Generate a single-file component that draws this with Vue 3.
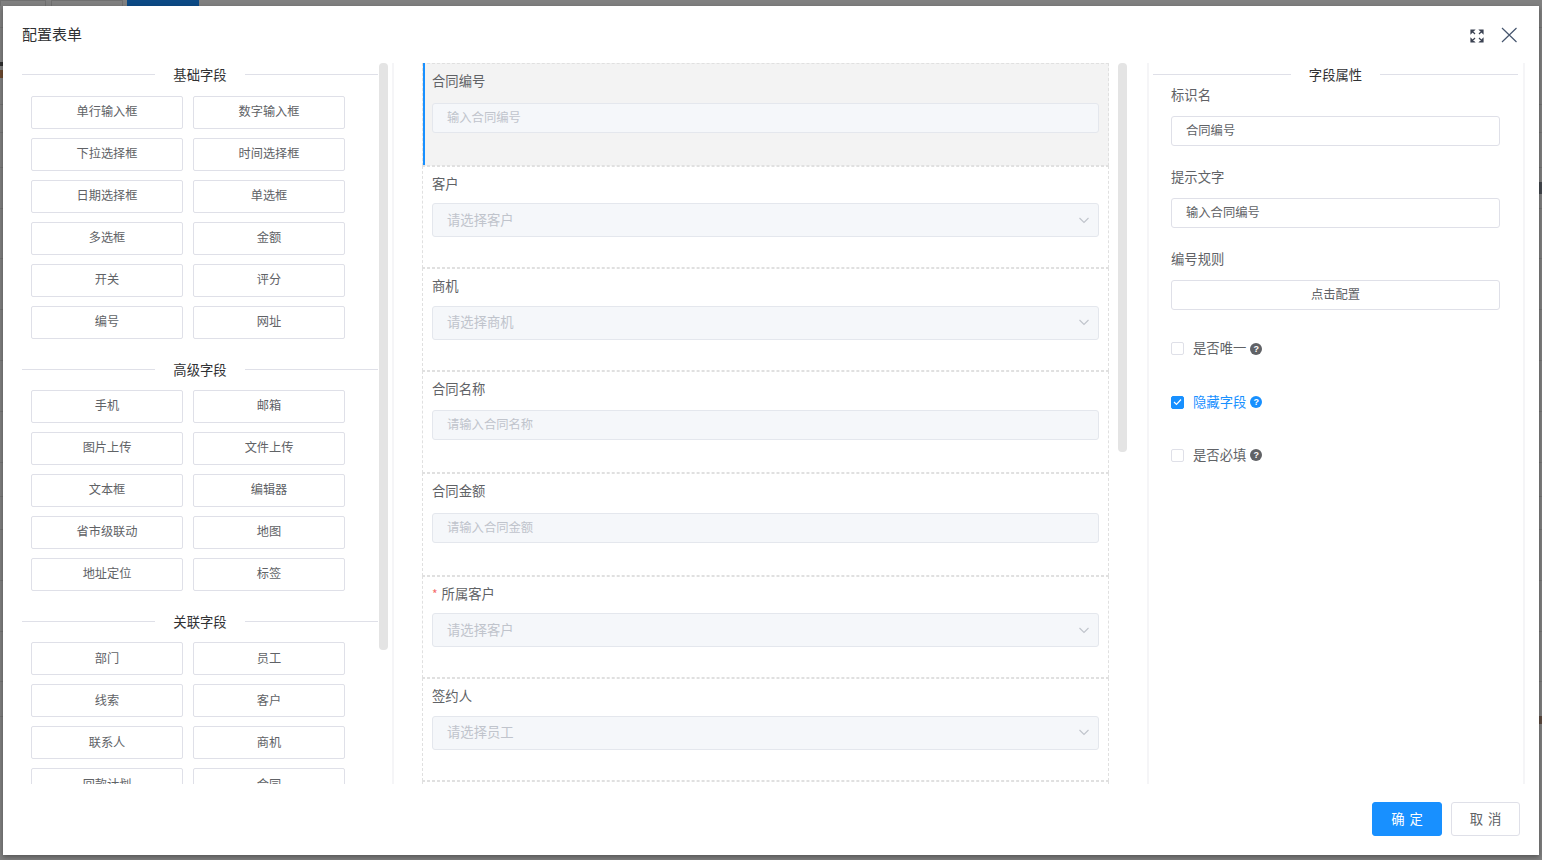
<script setup>
const groups = [
  { title: '基础字段', items: ['单行输入框', '数字输入框', '下拉选择框', '时间选择框', '日期选择框', '单选框', '多选框', '金额', '开关', '评分', '编号', '网址'] },
  { title: '高级字段', items: ['手机', '邮箱', '图片上传', '文件上传', '文本框', '编辑器', '省市级联动', '地图', '地址定位', '标签'] },
  { title: '关联字段', items: ['部门', '员工', '线索', '客户', '联系人', '商机', '回款计划', '合同'] }
]
const fields = [
  { label: '合同编号', ph: '输入合同编号', active: true },
  { label: '客户', ph: '请选择客户', select: true },
  { label: '商机', ph: '请选择商机', select: true },
  { label: '合同名称', ph: '请输入合同名称' },
  { label: '合同金额', ph: '请输入合同金额' },
  { label: '所属客户', ph: '请选择客户', select: true, required: true },
  { label: '签约人', ph: '请选择员工', select: true },
  { label: '签约日期', ph: '请选择日期', select: true }
]
const checks = [
  { label: '是否唯一', on: false },
  { label: '隐藏字段', on: true },
  { label: '是否必填', on: false }
]
const bgLines = [27, 104, 132, 167, 208, 258, 309, 360, 411, 462, 496, 529, 580, 631, 681, 716]
</script>

<template>
  <div class="page">
    <div class="bg-layer">
      <i v-for="y in bgLines" :key="y" class="bg-line" :style="{ top: y + 'px' }"></i>
      <i class="bg-mark left-mark"></i>
      <i class="bg-mark right-mark"></i>
      <i class="bg-mark right-mark2"></i>
    </div>
    <div class="backdrop-top">
      <span class="bg-btn w46"></span>
      <span class="bg-btn w72"></span>
      <span class="bg-btn primary"></span>
    </div>
    <div class="dialog">
      <header class="head">
        <span class="title">配置表单</span>
        <div class="head-icons">
          <svg class="ic-full" width="14" height="14" viewBox="0 0 14 14" fill="#3c4353" stroke="#3c4353" stroke-width="1.2">
            <path d="M1 1h3.200L1 4.200zM1.500 1.500l3.500 3.500" />
            <path d="M13 1H9.800L13 4.200zM12.500 1.500L9 5" />
            <path d="M1 13h3.200L1 9.800zM1.500 12.500L5 9" />
            <path d="M13 13H9.800L13 9.800zM12.500 12.500L9 9" />
          </svg>
          <svg class="ic-close" width="16" height="16" viewBox="0 0 16 16" fill="none" stroke="#46566e" stroke-width="1.2">
            <path d="M1 1l14.500 14M15.500 1L1 15" />
          </svg>
        </div>
      </header>

      <div class="body">
        <aside class="col-left">
          <section v-for="g in groups" :key="g.title" class="group">
            <div class="divider"><i></i><span>{{ g.title }}</span><i></i></div>
            <div class="btn-grid">
              <div v-for="it in g.items" :key="it" class="field-btn">{{ it }}</div>
            </div>
          </section>
          <div class="thumb thumb-left"></div>
        </aside>

        <main class="col-mid">
          <div class="list">
            <div v-for="f in fields" :key="f.label" class="item" :class="{ active: f.active }">
              <div class="item-label"><em v-if="f.required">*</em>{{ f.label }}</div>
              <div class="ctrl-row">
                <div v-if="f.select" class="ctrl select">
                  <span>{{ f.ph }}</span>
                  <svg class="chev" width="12" height="7" viewBox="0 0 12 7" fill="none" stroke="#c0c4cc" stroke-width="1.1"><path d="M1.500 1l4.500 4.500L10.500 1" /></svg>
                </div>
                <div v-else class="ctrl input"><span>{{ f.ph }}</span></div>
              </div>
            </div>
          </div>
          <div class="thumb thumb-mid"></div>
        </main>

        <aside class="col-right">
          <div class="divider right"><i></i><span>字段属性</span><i></i></div>
          <div class="props">
            <div class="prop">
              <div class="prop-label">标识名</div>
              <div class="prop-input">合同编号</div>
            </div>
            <div class="prop">
              <div class="prop-label">提示文字</div>
              <div class="prop-input">输入合同编号</div>
            </div>
            <div class="prop">
              <div class="prop-label">编号规则</div>
              <div class="prop-input center">点击配置</div>
            </div>
            <div class="checks">
              <div v-for="c in checks" :key="c.label" class="check" :class="{ on: c.on }">
                <span class="box">
                  <svg v-if="c.on" width="9" height="8" viewBox="0 0 9 8" fill="none" stroke="#fff" stroke-width="1.2"><path d="M1 4l2.500 2.500L8 1.500" /></svg>
                </span>
                <span class="check-text">{{ c.label }}</span>
                <span class="help">?</span>
              </div>
            </div>
          </div>
        </aside>
      </div>

      <footer class="foot">
        <button class="btn primary-btn">确 定</button>
        <button class="btn plain-btn">取 消</button>
      </footer>
    </div>
  </div>
</template>

<style>
html, body { margin: 0; padding: 0; background: #808080; overflow: hidden; }
</style>

<style scoped>
* { box-sizing: border-box; }
.page {
  width: 1542px;
  height: 860px;
  padding: 6px 3px 5px;
  position: relative;
  overflow: hidden;
  background: #808080;
  font-family: "Noto Sans CJK SC", "Noto Sans", sans-serif;
  color: #606266;
}
.bg-layer { position: absolute; inset: 0; }
.bg-line { position: absolute; left: 0; right: 0; height: 1px; background: #747474; }
.bg-mark { position: absolute; width: 3px; }
.left-mark { left: 0; top: 62px; height: 16px; background: linear-gradient(#303030 0 4px, #808080 4px 8px, #6d4a30 8px); }
.right-mark { right: 0; top: 182px; height: 12px; background: #44484e; }
.right-mark2 { right: 0; top: 716px; height: 8px; background: #5c4a40; }
.backdrop-top {
  position: absolute;
  left: 0;
  top: 0;
  display: flex;
  gap: 5px;
}
.bg-btn { display: block; height: 6px; border: 1px solid #707070; border-bottom: 0; background: #808080; }
.bg-btn.w46 { width: 46px; }
.bg-btn.w72 { width: 72px; margin-right: -1px; }
.bg-btn.primary { width: 72px; background: #0c4a85; border: 0; }
.dialog {
  position: relative;
  width: 1536px;
  height: 849px;
  background: #fff;
  box-shadow: 0 2px 5px rgba(0, 0, 0, .35);
  display: flex;
  flex-direction: column;
}
.head {
  height: 57px;
  flex: none;
  display: flex;
  justify-content: space-between;
  padding: 17px 22px 0 19px;
}
.title { font-size: 15px; line-height: 21px; color: #303133; }
.head-icons { display: flex; gap: 17px; align-items: flex-start; padding-top: 4px; }
.ic-full { margin-top: 2px; }
.body { height: 721px; flex: none; display: flex; overflow: hidden; }
.col-left {
  width: 372px;
  margin-left: 19px;
  flex: none;
  position: relative;
  overflow: hidden;
  border-right: 2px solid #f5f5f7;
}
.group { padding-bottom: 19px; }
.divider { display: flex; align-items: center; height: 24px; width: 356px; gap: 18px; }
.divider i { flex: 1; height: 1px; background: #dfe0e8; margin-top: -1px; }
.divider span { font-size: 13.330px; line-height: 24px; height: 24px; color: #303133; }
.btn-grid {
  display: grid;
  grid-template-columns: 152px 152px;
  grid-auto-rows: 33px;
  gap: 9px 10px;
  padding: 9px 0 0 9px;
}
.group + .group .btn-grid { padding-top: 8px; }
.field-btn {
  border: 1px solid #dfe0e8;
  border-radius: 2px;
  font-size: 12.200px;
  line-height: 28px;
  text-align: center;
  color: #606266;
}
.group:last-of-type .field-btn { line-height: 30px; }
.thumb { position: absolute; top: 0; width: 8.500px; background: #e4e4e4; border-radius: 4px; }
.thumb-left { left: 357px; height: 587px; }
.thumb-mid { left: 724px; height: 389px; }
.col-mid {
  width: 753px;
  flex: none;
  padding-left: 28px;
  position: relative;
  overflow: hidden;
}
.list { width: 687px; }
.item {
  height: 102.500px;
  border: 1px dashed #e0e0e0;
  padding: 0 9px;
  position: relative;
}
.item.active { background: #f3f3f3; }
.item.active::before {
  content: "";
  position: absolute;
  left: 0;
  top: -1px;
  bottom: 0;
  width: 2px;
  background: #1890ff;
}
.item-label { font-size: 13.330px; line-height: 18px; padding-top: 8px; height: 36.500px; color: #606266; }
.item-label em { color: #f56c6c; font-style: normal; margin-right: 4px; font-size: 12px; }
.ctrl-row { height: 34px; display: flex; align-items: center; }
.ctrl {
  width: 100%;
  background: #f5f7fa;
  border: 1px solid #e4e7ed;
  border-radius: 3px;
  color: #c0c4cc;
  padding: 0 8px 0 14px;
  display: flex;
  align-items: center;
  justify-content: space-between;
}
.ctrl.input { height: 30px; font-size: 12.300px; padding-bottom: 2px; }
.ctrl.select { height: 34px; font-size: 13.330px; padding-bottom: 2px; }
.chev { margin-top: 2px; }
.col-right {
  width: 378px;
  flex: none;
  border-left: 2px solid #f5f5f7;
  border-right: 2px solid #f5f5f7;
  padding-left: 4px;
}
.divider.right { width: 365px; }
.props { padding: 0 0 0 18px; width: 347px; }
.prop { height: 82px; }
.prop-label { font-size: 13.330px; line-height: 17px; height: 18px; color: #606266; }
.props .prop:first-child { margin-top: -1px; }
.prop-input {
  margin-top: 12px;
  width: 329px;
  height: 30px;
  border: 1px solid #dfe0e8;
  border-radius: 3px;
  font-size: 12.300px;
  line-height: 26px;
  padding: 0 14px;
  color: #606266;
}
.prop-input.center { text-align: center; }
.checks { padding-top: 7px; display: flex; flex-direction: column; gap: 33.750px; }
.check { display: flex; align-items: center; height: 19.500px; font-size: 13.330px; color: #606266; }
.check.on { color: #1890ff; }
.check-text { margin-top: -2px; }
.box {
  width: 13px;
  height: 13px;
  border: 1px solid #dfe0e8;
  border-radius: 2px;
  margin-right: 9px;
  display: flex;
  align-items: center;
  justify-content: center;
}
.check.on .box { background: #1890ff; border-color: #1890ff; }
.help {
  width: 12px;
  height: 12px;
  border-radius: 50%;
  margin-left: 4px;
  background: #606266;
  color: #fff;
  font: bold 9px/12px "Liberation Sans", sans-serif;
  text-align: center;
}
.check.on .help { background: #1890ff; }
.foot {
  flex: 1;
  display: flex;
  justify-content: flex-end;
  align-items: flex-start;
  gap: 9px;
  padding: 18px 19px 0 0;
}
.btn {
  height: 34px;
  border-radius: 3px;
  font-family: inherit;
  font-size: 13.330px;
  letter-spacing: 1px;
  padding: 0 0 2px 1px;
}
.primary-btn { width: 70px; background: #1890ff; border: 1px solid #1890ff; color: #fff; }
.plain-btn { width: 69px; background: #fff; border: 1px solid #dfe0e8; color: #606266; }
</style>
